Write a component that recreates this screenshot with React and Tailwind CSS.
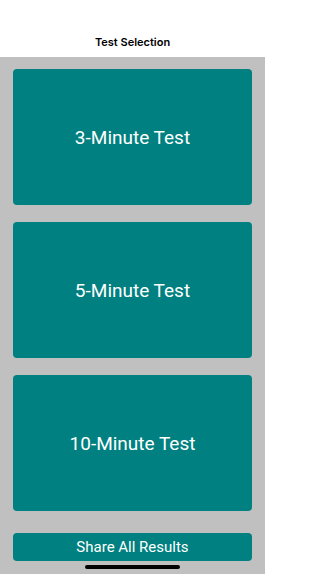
export default function App() {
  const tests = ["3-Minute Test", "5-Minute Test", "10-Minute Test"];
  return (
    <div
      className="relative w-[265px] h-[574px] flex flex-col overflow-hidden"
      style={{ fontFamily: "Roboto, 'Noto Sans', sans-serif" }}
    >
      <div className="h-[57px] bg-white flex items-start justify-center pt-[35px] shrink-0">
        <span className="text-[11px] leading-[14px] font-semibold text-black" style={{ fontFamily: "Inter, sans-serif" }}>Test Selection</span>
      </div>
      <div className="flex-1 bg-[#c0c0c0] px-[13px] pt-[12px] flex flex-col">
        <div className="flex flex-col gap-[17px]">
          {tests.map((t) => (
            <div
              key={t}
              className="h-[136px] rounded-[4px] bg-[#008080] flex items-center justify-center"
            >
              <span className="text-white text-[19px] leading-none font-normal">{t}</span>
            </div>
          ))}
        </div>
        <div className="mt-[22px] h-[28px] rounded-[4px] bg-[#008080] flex items-center justify-center">
          <span className="text-white text-[15px] leading-none">Share All Results</span>
        </div>
      </div>
      <div className="absolute left-[85px] top-[565px] w-[95px] h-[4px] rounded-full bg-black" />
    </div>
  );
}
